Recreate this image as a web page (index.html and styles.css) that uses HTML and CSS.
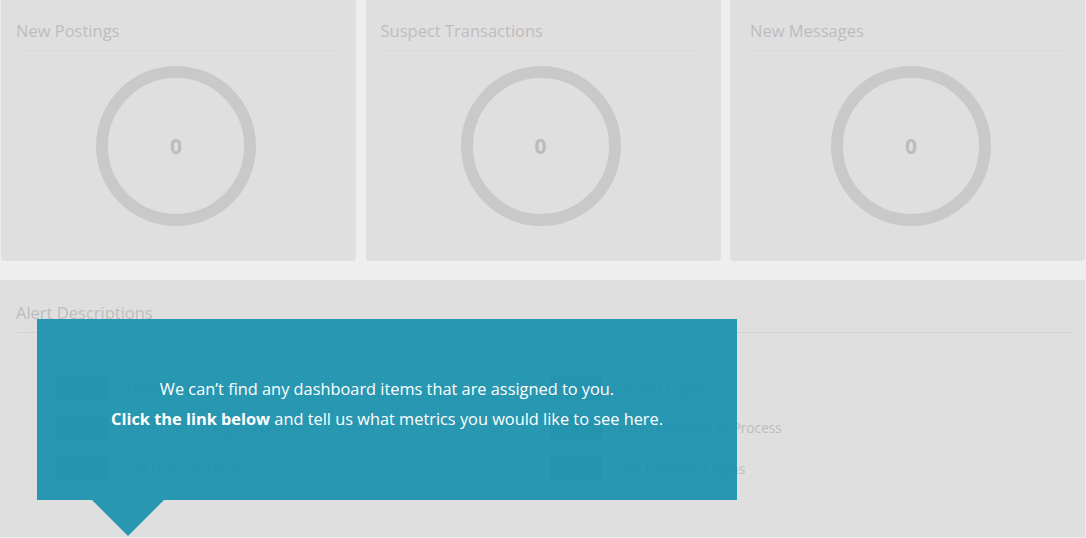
FILE: index.html
```html
<!DOCTYPE html>
<html lang="en">
<head>
<meta charset="utf-8">
<title>Dashboard</title>
<link rel="stylesheet" href="styles.css">
</head>
<body>
<div class="dashboard">
  <section class="metrics">
    <div class="metric-card">
      <h2 class="card-title">New Postings</h2>
      <div class="card-rule"></div>
      <div class="ring"><span class="ring-value">0</span></div>
    </div>
    <div class="metric-card">
      <h2 class="card-title">Suspect Transactions</h2>
      <div class="card-rule"></div>
      <div class="ring"><span class="ring-value">0</span></div>
    </div>
    <div class="metric-card metric-card--last">
      <h2 class="card-title">New Messages</h2>
      <div class="card-rule"></div>
      <div class="ring"><span class="ring-value">0</span></div>
    </div>
  </section>

  <section class="alerts">
    <h2 class="panel-title">Alert Descriptions</h2>
    <div class="panel-rule"></div>
    <div class="alert-grid">
      <div class="alert-col">
        <div class="alert-row"><span class="alert-btn">+</span><span class="alert-name shift">Disabled Logins</span></div>
        <div class="alert-row"><span class="alert-btn">+</span><span class="alert-name">Statement Change Requests</span></div>
        <div class="alert-row"><span class="alert-btn">+</span><span class="alert-name">CSR User Lockouts</span></div>
      </div>
      <div class="alert-col">
        <div class="alert-row"><span class="alert-btn">+</span><span class="alert-name">Locked Logins</span></div>
        <div class="alert-row"><span class="alert-btn">+</span><span class="alert-name">Micro Deposits to Process</span></div>
        <div class="alert-row"><span class="alert-btn">+</span><span class="alert-name">CSR Disabled Logins</span></div>
      </div>
    </div>

    <div class="notice">
      <p>We can’t find any dashboard items that are assigned to you.</p>
      <p><strong>Click the link below</strong> and tell us what metrics you would like to see here.</p>
      <span class="notice-arrow"></span>
    </div>
  </section>
</div>
</body>
</html>
```
FILE: styles.css
```css
* {
  box-sizing: border-box;
}

html, body {
  margin: 0;
  padding: 0;
}

body {
  background: #eeeeee;
  font-family: "Open Sans", "Noto Sans", "Liberation Sans", sans-serif;
  width: 1086px;
  height: 538px;
  overflow: hidden;
}

.dashboard {
  display: flex;
  flex-direction: column;
  gap: 19px;
}

/* three metric tiles along the top */
.metrics {
  display: grid;
  grid-template-columns: repeat(3, 1fr);
  column-gap: 9.5px;
  padding: 0 1px;
}

.metric-card {
  background: #dfdfdf;
  border-radius: 0 0 4px 4px;
  height: 261px;
  padding: 21px 0 0;
  display: flex;
  flex-direction: column;
}

.card-title {
  margin: 0 0 0 15px;
  font-size: 16.5px;
  font-weight: 400;
  line-height: 20px;
  color: #bdbdbd;
}

.card-rule {
  height: 1px;
  background: #d9d9d9;
  margin: 9px 21px 0 20px;
}

.ring {
  align-self: center;
  width: 160px;
  height: 160px;
  margin-top: 15px;
  margin-left: -5px;
  border-radius: 50%;
  border: 12px solid #c9c9c9;
  display: flex;
  align-items: center;
  justify-content: center;
}

.ring-value {
  font-size: 21px;
  font-weight: 700;
  color: #bcbcbc;
  line-height: 1;
}

/* the last tile sits its content a few pixels further in */
.metric-card--last {
  padding-left: 5px;
}

.metric-card--last .card-rule {
  margin: 9px 17px 0 18px;
}

.metric-card--last .ring {
  margin-left: 2px;
}

/* alert descriptions panel */
.alerts {
  position: relative;
  background: #dfdfdf;
  width: 1085px;
  height: 257px;
  padding-top: 23px;
}

.panel-title {
  margin: 0 0 0 16px;
  font-size: 16.5px;
  font-weight: 400;
  line-height: 20px;
  color: #bdbdbd;
}

.panel-rule {
  height: 1px;
  background: #d2d2d2;
  margin: 9px 13px 0 18px;
}

.alert-grid {
  display: grid;
  grid-template-columns: 494px 494px;
  margin: 43px 0 0 56px;
}

.alert-col {
  display: flex;
  flex-direction: column;
  gap: 14px;
}

.alert-row {
  display: flex;
  align-items: center;
  gap: 15px;
  height: 25px;
}

.alert-row:last-child {
  margin-top: 2px;
}

.alert-btn {
  width: 52px;
  height: 25px;
  border-radius: 3px;
  background: #c4c4c4;
  color: #a8a8a8;
  font-size: 14px;
  line-height: 25px;
  text-align: center;
}

.alert-name {
  font-size: 13.7px;
  color: #bdbdbd;
  white-space: nowrap;
}

.alert-name.shift {
  margin-left: 4px;
}

/* empty-state callout laid over the panel */
.notice {
  position: absolute;
  left: 37px;
  top: 39px;
  width: 700px;
  height: 181px;
  background: rgba(15, 141, 172, 0.88);
  color: #ffffff;
  text-align: center;
  padding-top: 55px;
  font-size: 16.35px;
}

.notice p {
  margin: 0;
  line-height: 30px;
}

.notice strong {
  font-weight: 700;
}

.notice-arrow {
  position: absolute;
  left: 55px;
  top: 181px;
  width: 0;
  height: 0;
  border-left: 36.5px solid transparent;
  border-right: 36.5px solid transparent;
  border-top: 36px solid #2897b2;
}
```
